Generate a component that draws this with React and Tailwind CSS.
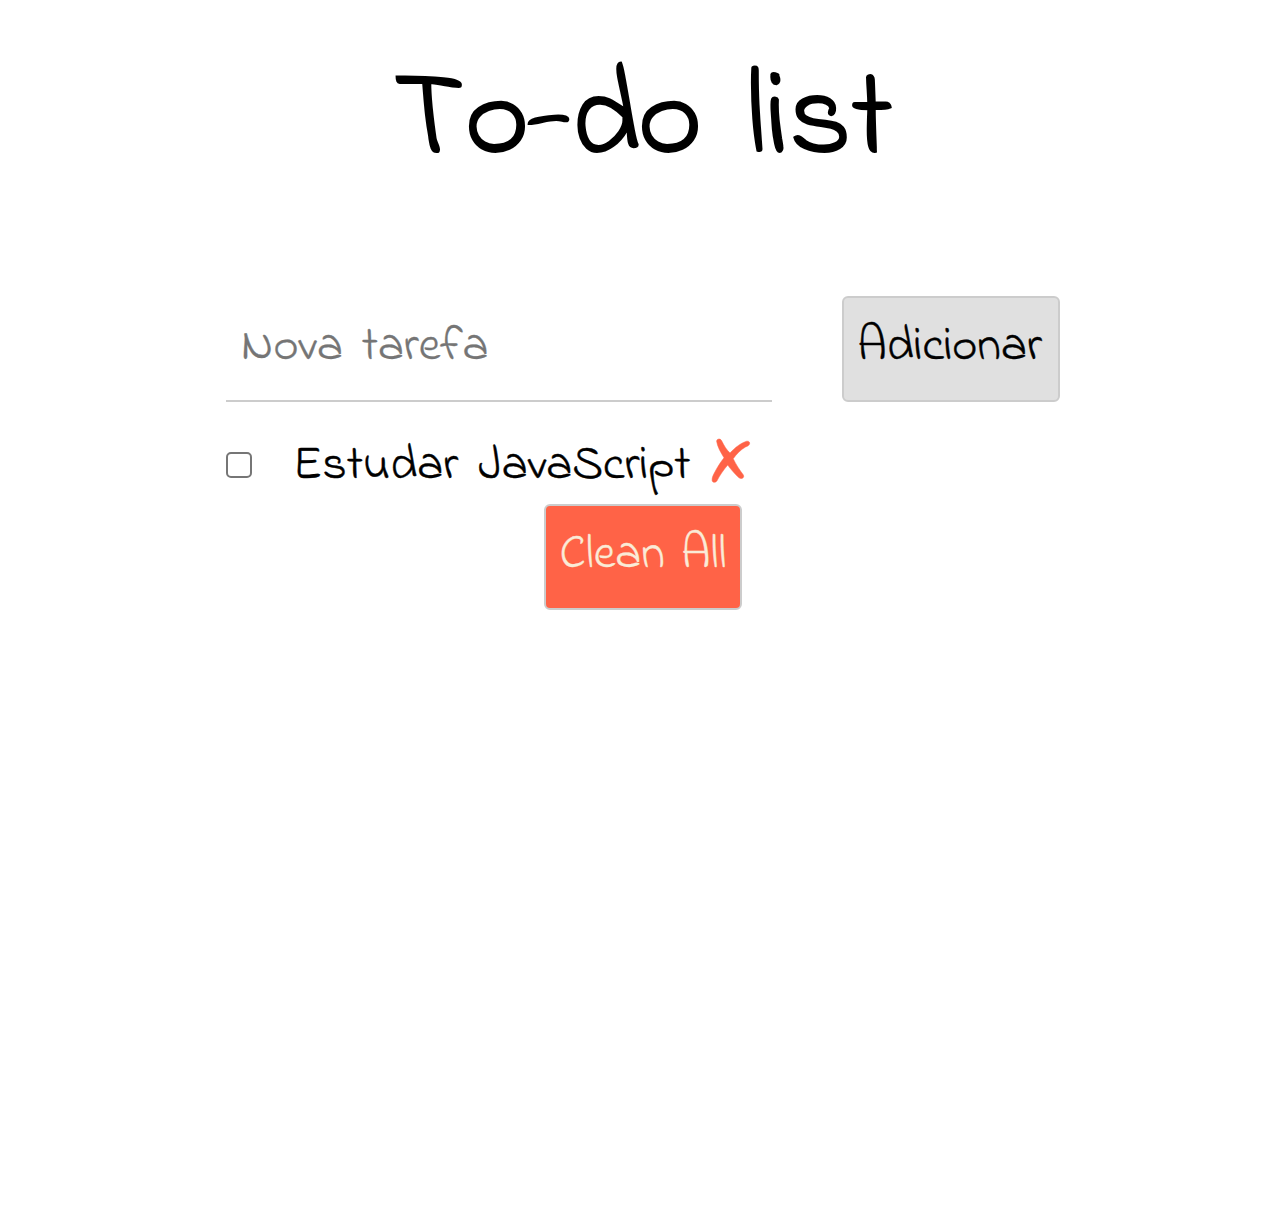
function CrossMark() {
  return (
    <svg width="40" height="46" viewBox="0 0 40 46" fill="currentColor" stroke="currentColor" strokeWidth="0.5" strokeLinejoin="round" aria-hidden="true">
      <path d="M5.6 3.2C5.8.6 9.2.3 10.5 2.5C13.2 8 15.7 12 19 15C24 9.6 30 4.8 35.8 3.2C38 2.8 39.4 4.6 38.3 6.5C37.5 7.9 36.4 8.1 34.5 9C29.9 11.6 25.6 16 22.2 20.7C25.2 26.8 28.5 31.8 32.2 36.7C34 39.7 30.5 41.6 28 39.8C23.6 35.6 20 31.6 16.7 27C12.5 32 8.6 37.5 6 42.8C4.5 45 1.3 44.8 1.1 42.3C.9 39.4 2.4 36.7 4 33.7C6.8 28.5 9.7 24 13 19.8C9.9 14.5 6.4 9 5.6 3.2Z" />
    </svg>
  );
}

export default function App() {
  return (
    <main className="flex min-h-screen flex-col items-center bg-white pt-[48px] font-['Indie_Flower','Lato',sans-serif] text-black">
      <h1 className="h-[150px] whitespace-pre text-[123px] leading-[150px] [-webkit-text-stroke:2px_black] [word-spacing:15px]">
        <span className="tracking-[1px]">T</span>
        <span className="tracking-[-2px]">o-do</span>
        {" list"}
      </h1>
      <section className="mt-[98px] w-[834px]">
        <div className="flex justify-between">
          <input aria-label="Nova tarefa" placeholder="Nova tarefa" className="h-[106px] w-[546px] border-b-2 border-[#cccccc] px-[15px] pb-[2px] text-[48px] outline-none [word-spacing:7px] [-webkit-text-stroke:0.3px] placeholder:text-[#757575]" />
          <button className="h-[106px] w-[218px] rounded-[6px] border-2 border-[#cccccc] bg-[#e0e0e0] pr-[3px] pb-[4px] text-[48px] leading-none [-webkit-text-stroke:0.4px]">Adicionar</button>
        </div>
        <div className="mt-[26px] flex h-[76px] items-center">
          <input type="checkbox" aria-label="Estudar JavaScript" className="mb-[2px] h-[26px] w-[26px] appearance-none rounded-[5px] border-2 border-[#767676] bg-white" />
          <span className="ml-[41px] w-[398px] whitespace-nowrap text-[48px] tracking-[0.06px] [-webkit-text-stroke:0.4px] [word-spacing:8px]">Estudar JavaScript</span>
          <button aria-label="✗" className="mb-[11px] ml-[20px] text-[#ff6347]"><CrossMark /></button>
        </div>
        <button className="mx-auto block h-[106px] w-[198px] rounded-[6px] border-2 border-[#cccccc] bg-[#ff6347] pb-[4px] text-[48px] leading-none text-[#faebd7] [-webkit-text-stroke:0.3px] [word-spacing:4px]">Clean All</button>
      </section>
    </main>
  );
}
